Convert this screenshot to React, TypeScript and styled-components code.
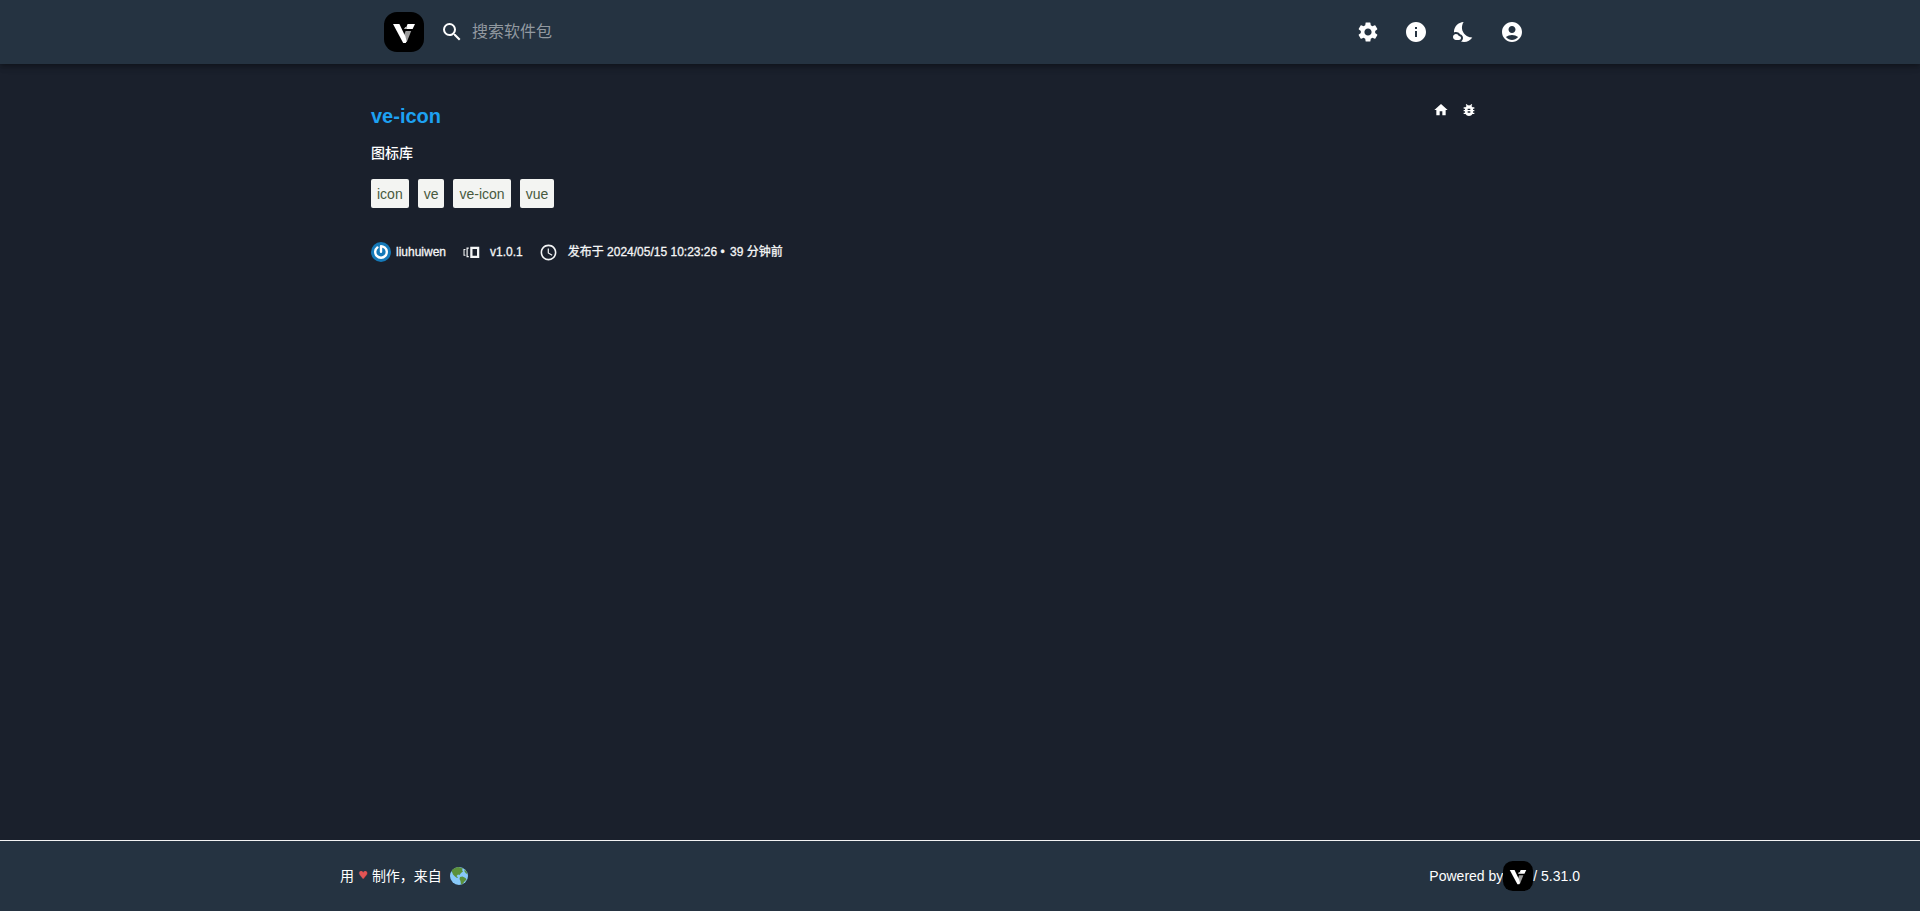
import React from "react";
import styled, { createGlobalStyle } from "styled-components";
import {
  MdSearch,
  MdSettings,
  MdInfo,
  MdNightsStay,
  MdAccountCircle,
  MdHome,
  MdBugReport,
} from "react-icons/md";

const GlobalStyle = createGlobalStyle`
  * { box-sizing: border-box; }
  body {
    margin: 0;
    background: #1a202c;
    color: #fff;
    font-family: "Liberation Sans", "Noto Sans CJK SC", sans-serif;
    font-size: 14px;
    line-height: 20px;
  }
`;

const Page = styled.div`
  display: flex;
  flex-direction: column;
  min-height: 100vh;
`;

const Header = styled.header`
  background: #253341;
  box-shadow: 0 2px 4px -1px rgba(0, 0, 0, 0.2), 0 4px 5px rgba(0, 0, 0, 0.14),
    0 1px 10px rgba(0, 0, 0, 0.12);
`;

const Toolbar = styled.div`
  display: flex;
  align-items: center;
  gap: 16px;
  max-width: 1200px;
  height: 64px;
  margin: 0 auto;
  padding: 0 24px;
`;

const LogoLink = styled.a`
  display: flex;
`;

const SearchBox = styled.label`
  display: flex;
  flex: 1;
  align-items: center;
  gap: 8px;
  svg { flex: none; }
`;

const SearchInput = styled.input`
  flex: 1;
  min-width: 0;
  padding: 0;
  border: 0;
  outline: 0;
  background: transparent;
  color: #fff;
  font: inherit;
  font-size: 16px;
  line-height: 24px;
  &::placeholder { color: #9299a0; opacity: 1; }
`;

const Actions = styled.nav`
  display: flex;
`;

const IconButton = styled.button`
  display: flex;
  padding: 12px;
  border: 0;
  background: transparent;
  color: #fff;
  cursor: pointer;
`;

const Main = styled.main`
  flex: 1;
  width: 100%;
  max-width: 1240px;
  margin: 0 auto;
  padding: 36px 31px;
`;

const PackageHead = styled.div`
  display: flex;
  justify-content: space-between;
  align-items: flex-start;
`;

const Title = styled.h1`
  margin: 0;
  font-size: 20px;
  line-height: 32px;
  a { color: #1da1f2; text-decoration: none; }
`;

const PackageLinks = styled.div`
  display: flex;
  gap: 12px;
  padding: 2px 72px 0 0;
`;

const PackageLink = styled.a`
  display: flex;
  color: #fff;
`;

const Description = styled.p`
  margin: 11px 0 16px;
  font-weight: 500;
`;

const Tags = styled.ul`
  display: flex;
  gap: 9px;
  margin: 0 0 34px;
  padding: 0;
  list-style: none;
`;

const Tag = styled.li`
  padding: 5px 6px 4px;
  border-radius: 2px;
  background: #f3f4f2;
  color: #485a3e;
`;

const Meta = styled.div`
  display: flex;
  align-items: center;
  gap: 16px;
  color: #f4f5f6;
  font-size: 12px;
  -webkit-text-stroke: 0.3px;
`;

const MetaItem = styled.span<{ $gap: number }>`
  display: flex;
  align-items: center;
  gap: ${(p) => p.$gap}px;
`;

const Bullet = styled.span`
  margin-right: 2px;
`;

const Footer = styled.footer`
  border-top: 1px solid #f4f4f4;
  background: #253341;
`;

const FooterInner = styled.div`
  display: flex;
  align-items: center;
  justify-content: space-between;
  max-width: 1240px;
  height: 70px;
  margin: 0 auto;
`;

const FooterGroup = styled.div`
  display: flex;
  align-items: center;
`;

const Heart = styled.span`
  margin: 0 4px;
  color: #e25555;
  font-family: "DejaVu Sans", sans-serif;
  font-size: 11px;
`;

const EarthSlot = styled.span`
  display: flex;
  margin-left: 8px;
`;

const Logo = ({ size }: { size: number }) => (
  <svg width={size} height={size} viewBox="0 0 40 40" aria-label="Verdaccio" role="img">
    <rect width="40" height="40" rx="13" fill="#000" />
    <path d="M21.6 19h5.6L22.8 30h-2.6l-1-4.5z" fill="#9b9b9b" />
    <path d="M9 12h6.4l6 12.6 1.2 4.4-.8 2h-2.6z" fill="#fff" />
    <path d="M23.6 12H31l-2.4 5h-8.2l.8-2h1.2z" fill="#fff" />
    <path d="M20.4 17l.8-2h2.2l-.6 2z" fill="#b5b5b5" />
  </svg>
);

const Avatar = () => (
  <svg width="20" height="20" viewBox="0 0 20 20" aria-hidden="true">
    <circle cx="10" cy="10" r="10" fill="#1579b8" />
    <path d="M6.4 5.4A5.8 5.8 0 1 0 13.6 5.4Q12 4.4 10 4.3V9.8" fill="none" stroke="#fff" strokeWidth="2.4" strokeLinecap="round" strokeLinejoin="round" />
  </svg>
);

const VersionIcon = () => (
  <svg width="18" height="18" viewBox="0 0 24 24" fill="currentColor" aria-hidden="true">
    <path d="M11 5v15h12V5H11zm9 12h-6V8h6v9zM6 6h3v1.6H7.6v9.8H9V19H6zM2 8h2.6v1.4H3.4v6.2h1.2V17H2z" />
  </svg>
);

const ClockIcon = () => (
  <svg width="19" height="19" viewBox="0 0 24 24" fill="currentColor" aria-hidden="true">
    <path d="M11.99 2C6.47 2 2 6.48 2 12s4.47 10 9.99 10C17.52 22 22 17.52 22 12S17.52 2 11.99 2zM12 20c-4.42 0-8-3.58-8-8s3.58-8 8-8 8 3.58 8 8-3.58 8-8 8z" />
    <path d="M12.5 7H11v6l5.25 3.15.75-1.23-4.5-2.67z" />
  </svg>
);

const Earth = () => (
  <svg width="18" height="18" viewBox="0 0 36 36" role="img" aria-label="Earth">
    <circle cx="18" cy="18" r="18" fill="#88c9f9" />
    <path d="M3 8C7 2 13 0 18 0l4 2 4 1-2 3 2 3-4 3-3 4-3-1-3 3 3 3-2 1-4-3-4-4-2-5zM20 20l5-1 6 3 2 3-4 4-4 5-3 1-1-7-2-4zM29 5l4 4 2 5-3-1-3-4z" fill="#5c913b" />
  </svg>
);

const tags = ["icon", "ve", "ve-icon", "vue"];

export default function App() {
  return (
    <Page>
      <GlobalStyle />
      <Header>
        <Toolbar>
          <LogoLink href="#"><Logo size={40} /></LogoLink>
          <SearchBox>
            <MdSearch size={24} aria-hidden="true" />
            <SearchInput type="text" placeholder="搜索软件包" aria-label="搜索软件包" />
          </SearchBox>
          <Actions>
            <IconButton aria-label="设置"><MdSettings size={24} /></IconButton>
            <IconButton aria-label="信息"><MdInfo size={24} /></IconButton>
            <IconButton aria-label="夜间模式"><MdNightsStay size={24} /></IconButton>
            <IconButton aria-label="账户"><MdAccountCircle size={24} /></IconButton>
          </Actions>
        </Toolbar>
      </Header>
      <Main>
        <PackageHead>
          <Title><a href="#ve-icon">ve-icon</a></Title>
          <PackageLinks>
            <PackageLink href="#home" aria-label="主页"><MdHome size={16} /></PackageLink>
            <PackageLink href="#bugs" aria-label="问题"><MdBugReport size={16} /></PackageLink>
          </PackageLinks>
        </PackageHead>
        <Description>图标库</Description>
        <Tags>{tags.map((t) => <Tag key={t}>{t}</Tag>)}</Tags>
        <Meta>
          <MetaItem $gap={5}><Avatar />liuhuiwen</MetaItem>
          <MetaItem $gap={10}><VersionIcon />v1.0.1</MetaItem>
          <MetaItem $gap={10}>
            <ClockIcon />
            <span>发布于 2024/05/15 10:23:26 <Bullet>•</Bullet> 39 分钟前</span>
          </MetaItem>
        </Meta>
      </Main>
      <Footer>
        <FooterInner>
          <FooterGroup>用<Heart>♥</Heart>制作，来自<EarthSlot><Earth /></EarthSlot></FooterGroup>
          <FooterGroup>Powered by<Logo size={30} />/ 5.31.0</FooterGroup>
        </FooterInner>
      </Footer>
    </Page>
  );
}
